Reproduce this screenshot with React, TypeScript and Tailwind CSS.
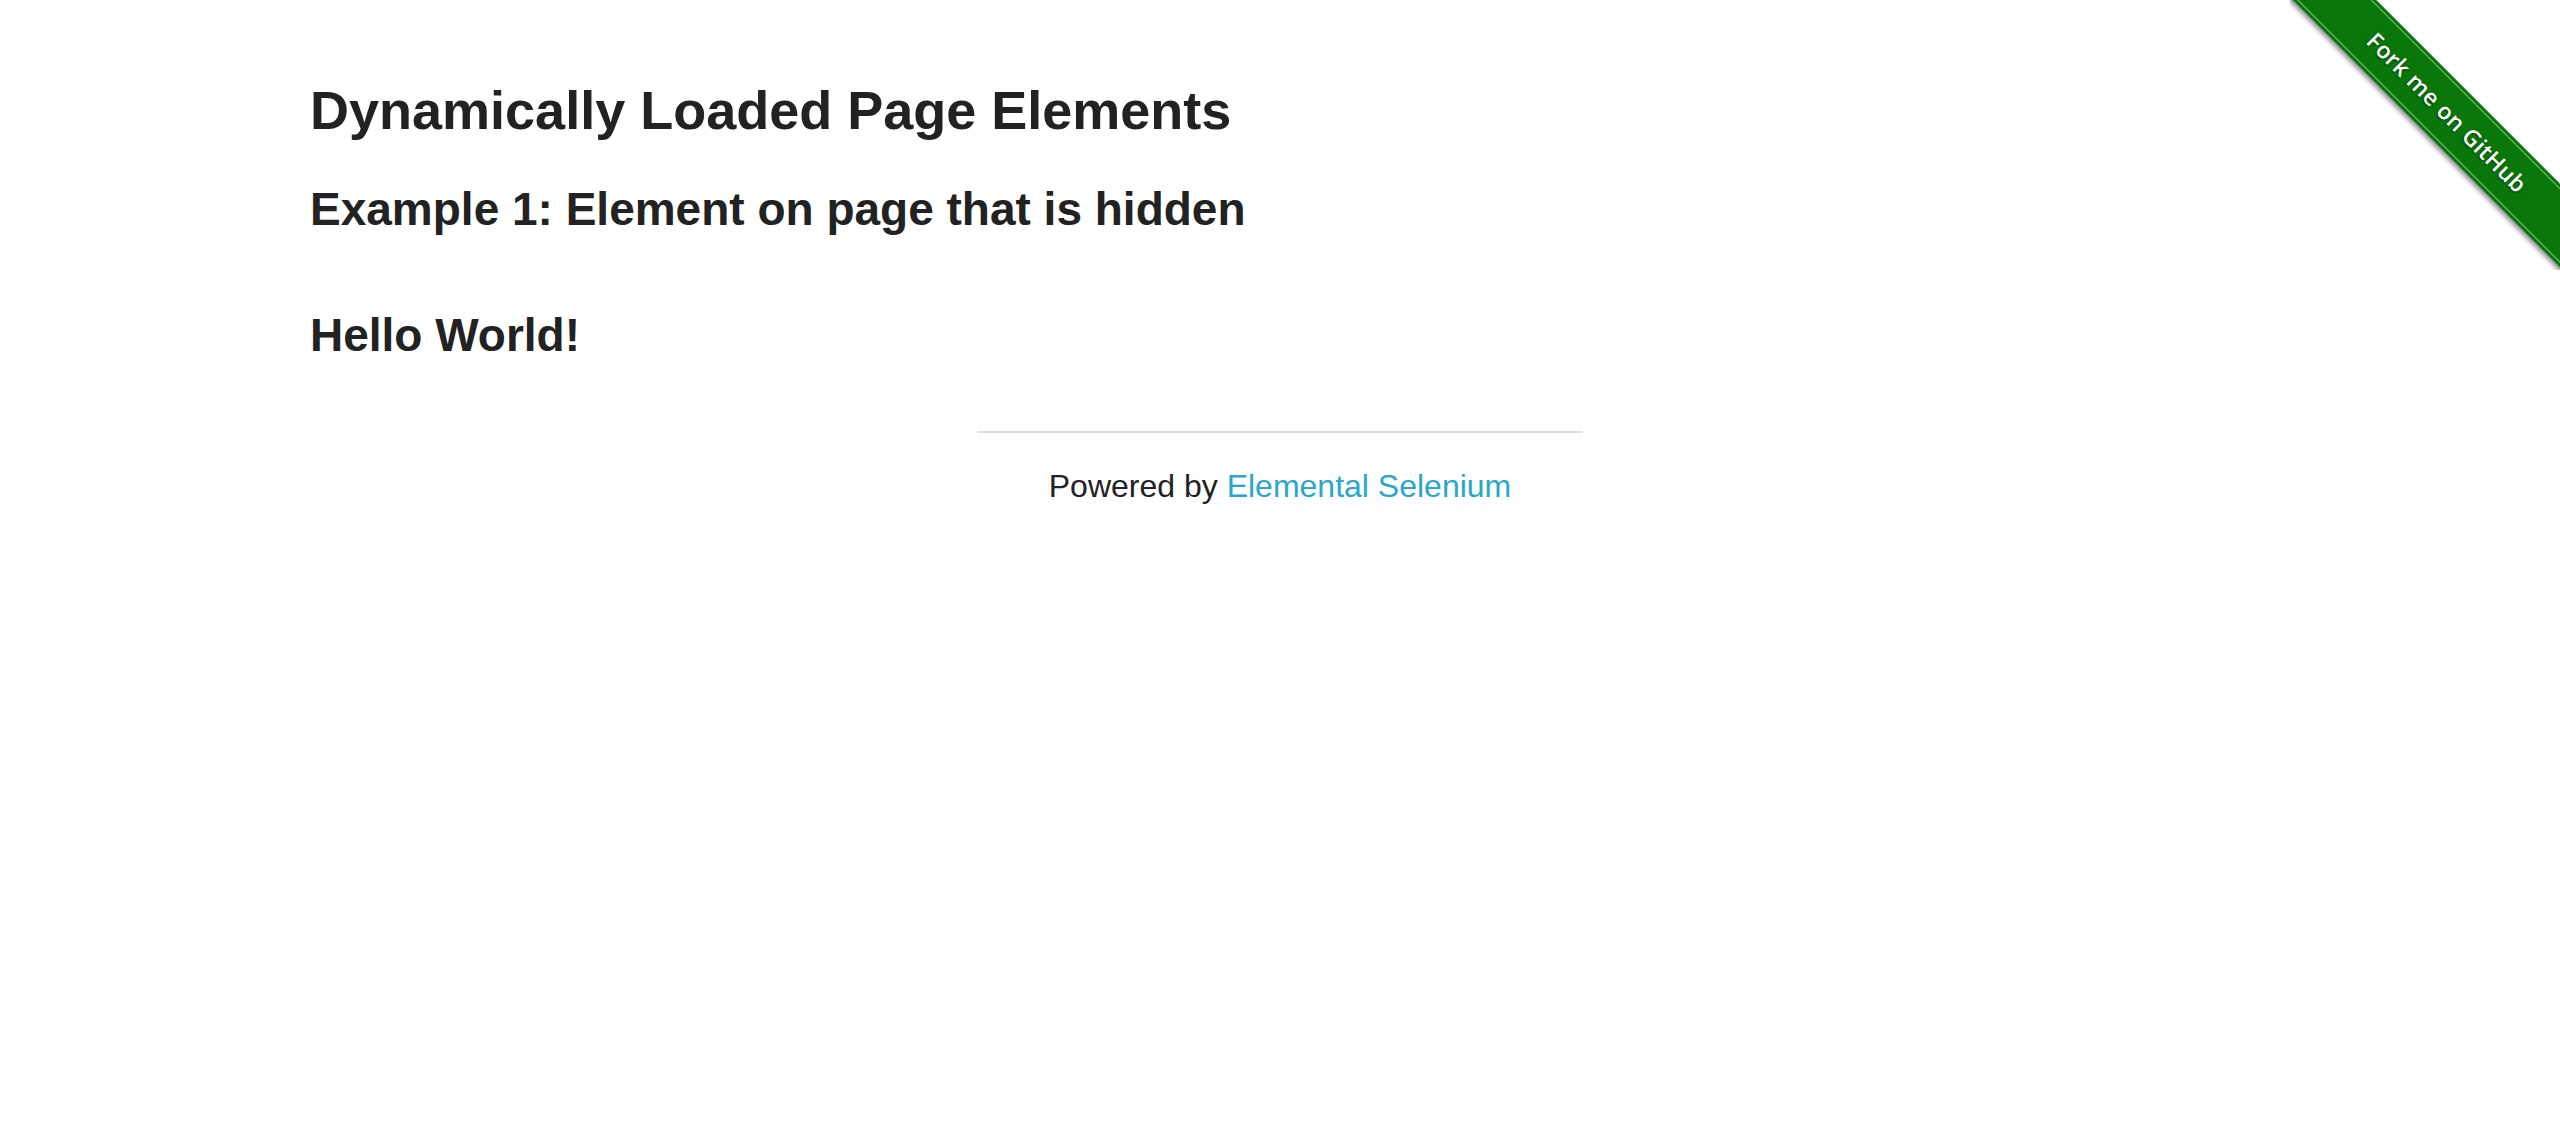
import React from 'react';

const ForkRibbon: React.FC = () => (
    <a
        href="#"
        className="absolute top-0 right-0 w-[270px] h-[270px] overflow-hidden block"
        aria-label="Fork me on GitHub"
    >
        <div className="absolute left-[-43px] top-[83px] w-[400px] h-[59px] rotate-45 bg-[#087608] shadow-[0_3px_5px_rgba(0,0,0,0.45)] flex items-center justify-center">
            <div className="absolute inset-x-0 top-[3px] border-t border-white/50"></div>
            <div className="absolute inset-x-0 bottom-[3px] border-b border-white/50"></div>
            <span
                className="text-white text-[23px] font-semibold tracking-[0.3px] [text-shadow:0_1px_2px_rgba(0,0,0,0.6)]"
                style={{ fontFamily: '"Open Sans", "DejaVu Sans", sans-serif' }}
            >
                Fork me on GitHub
            </span>
        </div>
    </a>
);

export default function App() {
    return (
        <div
            className="relative min-h-[1130px] bg-white text-[#222222]"
            style={{ fontFamily: '"Liberation Sans", Arial, sans-serif' }}
        >
            <ForkRibbon />

            <div className="mx-auto max-w-[2000px] px-[30px] pt-[73px]">
                <h3 className="m-0 text-[54px] font-bold leading-[1.4]">Dynamically Loaded Page Elements</h3>
                <h4 className="mt-[28px] text-[46px] font-bold leading-[1.4]">Example 1: Element on page that is hidden</h4>
                <div id="finish" className="mt-[62px]">
                    <h4 className="text-[46px] font-bold leading-[1.4]">Hello World!</h4>
                </div>
            </div>

            <div className="mx-auto w-[666.67px] px-[30px]">
                <hr className="mt-[64px] border-0 border-t-2 border-[#dddddd]" />
                <div className="mt-[29px] text-center text-[32px] leading-[48px]">
                    Powered by <a href="#" className="text-[#2ba6cb]">Elemental Selenium</a>
                </div>
            </div>
        </div>
    );
}
